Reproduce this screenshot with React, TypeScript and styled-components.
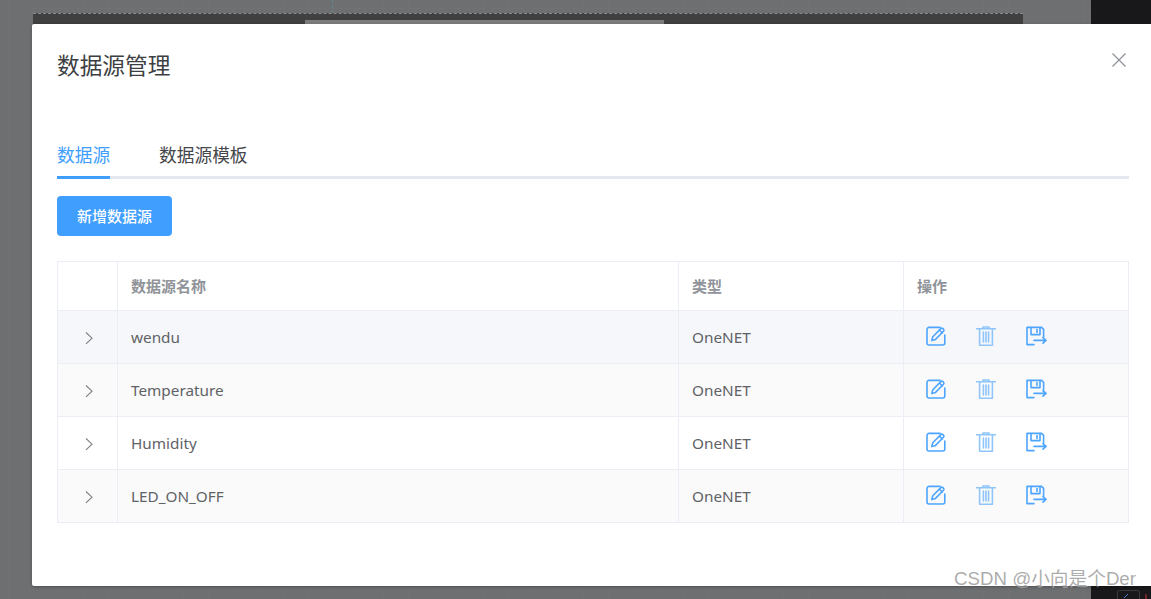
import React from 'react'
import styled, { createGlobalStyle } from 'styled-components'

const Global = createGlobalStyle`
    html, body {
        margin: 0;
        padding: 0;
        height: 100%;
        overflow: hidden;
    }
    body {
        font-family: "Noto Sans", "Noto Sans CJK SC", sans-serif;
    }
`

const Backdrop = styled.div`
    position: relative;
    width: 1151px;
    height: 599px;
    padding: 24px 0 13px 32px;
    box-sizing: border-box;
    overflow: hidden;
    background-color: #6e6f71;
    background-image:
        linear-gradient(rgba(255, 255, 255, 0.015) 1px, transparent 1px),
        linear-gradient(90deg, rgba(255, 255, 255, 0.015) 1px, transparent 1px);
    background-size: 25px 25px;
    background-position: 8px 8px;
`
const DarkStrip = styled.div`
    position: absolute;
    left: 33px;
    top: 13px;
    width: 990px;
    height: 11px;
    background-color: #404040;
    border-top: 1px dashed #8a8a8a;
    box-sizing: border-box;
`
const LightStrip = styled.div`
    position: absolute;
    left: 305px;
    top: 20px;
    width: 359px;
    height: 4px;
    background-color: #7c7c7c;
`
const GuideLine = styled.div`
    position: absolute;
    left: 332px;
    top: 0;
    height: 13px;
    border-left: 1px dashed #5f8488;
`
const SidePanel = styled.div`
    position: absolute;
    right: 0;
    top: 0;
    width: 60px;
    height: 100%;
    background-color: #18181a;
`
const BottomMark = styled.svg`
    position: absolute;
    right: 0;
    bottom: 0;
    width: 60px;
    height: 13px;
    fill: none;
`
const Dialog = styled.div`
    position: relative;
    height: 562px;
    padding: 0 22px 0 25px;
    box-sizing: border-box;
    background-color: #fff;
    border-radius: 2px 0 0 2px;
    box-shadow: 0 1px 3px rgba(0, 0, 0, 0.3);
`
const Header = styled.div`
    display: flex;
    align-items: center;
    justify-content: space-between;
    height: 82px;
`
const Title = styled.h2`
    margin: 0;
    padding-top: 2px;
    font-size: 22.7px;
    font-weight: 400;
    line-height: 80px;
    color: #3d3f43;
`
const CloseBtn = styled.svg`
    width: 14px;
    height: 14px;
    margin-right: 3px;
    position: relative;
    top: -5px;
    stroke: #909399;
    stroke-width: 1.3;
    fill: none;
`
const Tabs = styled.div`
    display: flex;
    gap: 49px;
    margin-top: 27px;
    height: 43px;
    border-bottom: 3px solid #e4e7ed;
`
const Tab = styled.div<{ $active?: boolean }>`
    height: 46px;
    box-sizing: border-box;
    font-size: 17.7px;
    line-height: 45px;
    color: ${p => (p.$active ? '#409eff' : '#45474b')};
    border-bottom: 3px solid ${p => (p.$active ? '#409eff' : 'transparent')};
`
const AddBtn = styled.button`
    display: block;
    width: 115px;
    height: 40px;
    margin: 17px 0 25px;
    padding: 0 0 2px;
    border: none;
    border-radius: 4px;
    font-family: inherit;
    font-size: 15px;
    font-weight: 500;
    color: #fff;
    background-color: #409eff;
`
const Table = styled.div`
    border: 1px solid #ebeef5;
    border-bottom: none;
    color: #606266;
    font-size: 15.3px;
`
const Row = styled.div<{ $bg?: string; $head?: boolean }>`
    display: grid;
    grid-template-columns: 59px 561px 225px 1fr;
    height: ${p => (p.$head ? '49px' : '53px')};
    box-sizing: border-box;
    background-color: ${p => p.$bg || '#fff'};
    border-bottom: 1px solid #ebeef5;
`
const Cell = styled.div`
    display: flex;
    align-items: center;
    padding-left: 13px;
    border-left: 1px solid #ebeef5;
    &:first-child {
        border-left: none;
        padding: 2px 0 0 3px;
        justify-content: center;
    }
`
const HeadCell = styled(Cell)`
    padding-bottom: 2px;
    font-size: 15px;
    font-weight: 700;
    color: #909399;
`
const Arrow = styled.svg`
    width: 16px;
    height: 16px;
    stroke: #7d7f84;
    stroke-width: 1.1;
    fill: none;
`
const Actions = styled.div`
    display: flex;
    gap: 30px;
    padding-left: 9px;
    position: relative;
    top: -1px;
`
const ActionIcon = styled.svg`
    width: 20px;
    height: 20px;
    fill: none;
    stroke: #4ea5ff;
    stroke-width: 1.6;
    stroke-linecap: round;
    stroke-linejoin: round;
`
const TrashIcon = styled(ActionIcon)`
    stroke: #8fc5fb;
`
const ExportSvg = styled(ActionIcon)`
    width: 21px;
`
const Watermark = styled.div`
    position: absolute;
    right: 15px;
    bottom: 9px;
    font-family: "Liberation Sans", "Noto Sans CJK SC", sans-serif;
    font-size: 18.7px;
    line-height: 22px;
    color: rgba(135, 135, 135, 0.7);
    text-shadow: 1px 1px 0 rgba(255, 255, 255, 0.35);
`

const EditIcon = () => (
    <ActionIcon viewBox="0 0 20 20">
        <path d="M18.8 9v8a2 2 0 0 1-2 2H3a2 2 0 0 1-2-2V3.4a2 2 0 0 1 2-2h11" />
        <path d="M5.8 14.6l1-3.8 8-8.2a1.5 1.5 0 0 1 2.1 0l.6.6a1.5 1.5 0 0 1 0 2.1l-8 8.1z" />
        <path d="M13.6 4.2l2.8 2.8" />
    </ActionIcon>
)

const DeleteIcon = () => (
    <TrashIcon viewBox="0 0 20 20">
        <path d="M0.5 2.8h19" />
        <path d="M7 2.4V1h6v1.4" />
        <path d="M3.6 3v15.8a.6.6 0 0 0 .6.6h11.6a.6.6 0 0 0 .6-.6V3" />
        <path d="M7.4 6v10M10 6v10M12.6 6v10" />
    </TrashIcon>
)

const ExportIcon = () => (
    <ExportSvg viewBox="0 0 21 20">
        <path d="M8 18.6H1V1.4h14.6l2 2V11" />
        <path d="M5 1.6v7h9v-7" />
        <path d="M11 3.6v2.8" />
        <path d="M8 14.4h12M17 11.6l3 2.8-3 2.8" />
    </ExportSvg>
)

const rows = [
    { name: 'wendu', bg: '#f5f7fa' },
    { name: 'Temperature', bg: '#fafafa' },
    { name: 'Humidity', bg: '#fff' },
    { name: 'LED_ON_OFF', bg: '#fafafa' },
]

export default function App() {
    return (
        <Backdrop>
            <Global />
            <DarkStrip />
            <LightStrip />
            <GuideLine />
            <SidePanel />
            <BottomMark viewBox="0 0 60 13">
                <rect x="26.5" y="4.5" width="22" height="12" rx="2" stroke="#3a3a3c" />
                <path d="M33 12l4-4" stroke="#3f7fd0" />
                <path d="M55 8v5" stroke="#c03030" />
            </BottomMark>
            <Dialog>
                <Header>
                    <Title>数据源管理</Title>
                    <CloseBtn viewBox="0 0 14 14">
                        <path d="M0.5 0.5l13 13M13.5 0.5l-13 13" />
                    </CloseBtn>
                </Header>
                <Tabs>
                    <Tab $active>数据源</Tab>
                    <Tab>数据源模板</Tab>
                </Tabs>
                <AddBtn>新增数据源</AddBtn>
                <Table>
                    <Row $head>
                        <HeadCell />
                        <HeadCell>数据源名称</HeadCell>
                        <HeadCell>类型</HeadCell>
                        <HeadCell>操作</HeadCell>
                    </Row>
                    {rows.map(r => (
                        <Row key={r.name} $bg={r.bg}>
                            <Cell>
                                <Arrow viewBox="0 0 16 16">
                                    <path d="M5 2.5l6 5.7-6 5.7" />
                                </Arrow>
                            </Cell>
                            <Cell>{r.name}</Cell>
                            <Cell>OneNET</Cell>
                            <Cell>
                                <Actions>
                                    <EditIcon />
                                    <DeleteIcon />
                                    <ExportIcon />
                                </Actions>
                            </Cell>
                        </Row>
                    ))}
                </Table>
            </Dialog>
            <Watermark>CSDN @小向是个Der</Watermark>
        </Backdrop>
    )
}
